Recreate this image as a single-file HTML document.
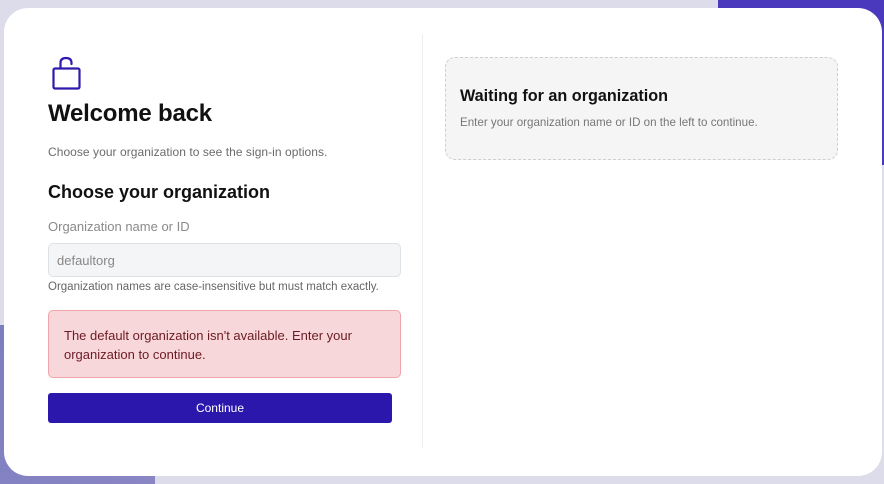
<!DOCTYPE html>
<html><head><meta charset="utf-8"><style>
*{margin:0;padding:0;box-sizing:border-box}
html,body{width:884px;height:484px;overflow:hidden}
body{background:#dcdcea;font-family:"Liberation Sans",sans-serif;position:relative}
.blob1{position:absolute;left:718px;top:0;width:166px;height:165px;background:#4a38bd;border-radius:0 0 0 40px}
.blob2{position:absolute;left:0;top:325px;width:155px;height:159px;background:linear-gradient(135deg,#7c7dbf,#8a86c4)}
.card{position:absolute;left:4px;top:8px;width:878px;height:468px;background:#fff;border-radius:24px}
.a{position:absolute;white-space:nowrap}
</style></head><body>
<div class="blob1"></div><div class="blob2"></div>
<div class="card"></div>
<svg class="a" style="left:50px;top:55px" width="34" height="36" viewBox="0 0 34 36"><rect x="3.5" y="13.5" width="26" height="20" rx="1.5" fill="none" stroke="#2e1aad" stroke-width="2.2"/><path d="M10.5 13 V8 Q10.5 3 16 3 Q21.5 3 21.5 8 V9" fill="none" stroke="#2e1aad" stroke-width="2.2" stroke-linecap="round"/></svg>
<div class="a" style="left:48px;top:100px;font-size:24px;font-weight:bold;color:#111;letter-spacing:-0.2px">Welcome back</div>
<div class="a" style="left:48px;top:145px;font-size:12px;color:#6b6b6b;letter-spacing:0.05px">Choose your organization to see the sign-in options.</div>
<div class="a" style="left:48px;top:182px;font-size:18px;font-weight:bold;color:#111">Choose your organization</div>
<div class="a" style="left:48px;top:219px;font-size:13px;color:#8a8a8a">Organization name or ID</div>
<div class="a" style="left:48px;top:243px;width:353px;height:34px;background:#f3f5f7;border:1px solid #dde2e7;border-radius:5px;padding:9px 8px;font-size:13px;color:#888">defaultorg</div>
<div class="a" style="left:48px;top:281px;font-size:11.5px;color:#666">Organization names are case-insensitive but must match exactly.</div>
<div class="a" style="left:48px;top:310px;width:353px;height:68px;background:#f8d7da;border:1px solid #f0a5ad;border-radius:5px;padding:15px 15px;font-size:13px;color:#6b1b24;line-height:19px;white-space:normal">The default organization isn't available. Enter your organization to continue.</div>
<div class="a" style="left:48px;top:393px;width:344px;height:30px;background:#2c17ad;border-radius:3px;color:#fff;font-size:12px;text-align:center;line-height:30px">Continue</div>
<div class="a" style="left:422px;top:34px;width:1px;height:414px;background:#eeeef2"></div>
<div class="a" style="left:445px;top:57px;width:393px;height:103px;background:#f5f5f5;border:1px dashed #cfcfcf;border-radius:10px"></div>
<div class="a" style="left:460px;top:87px;font-size:16.2px;font-weight:bold;color:#111">Waiting for an organization</div>
<div class="a" style="left:460px;top:116px;font-size:11.6px;color:#777">Enter your organization name or ID on the left to continue.</div>
</body></html>
